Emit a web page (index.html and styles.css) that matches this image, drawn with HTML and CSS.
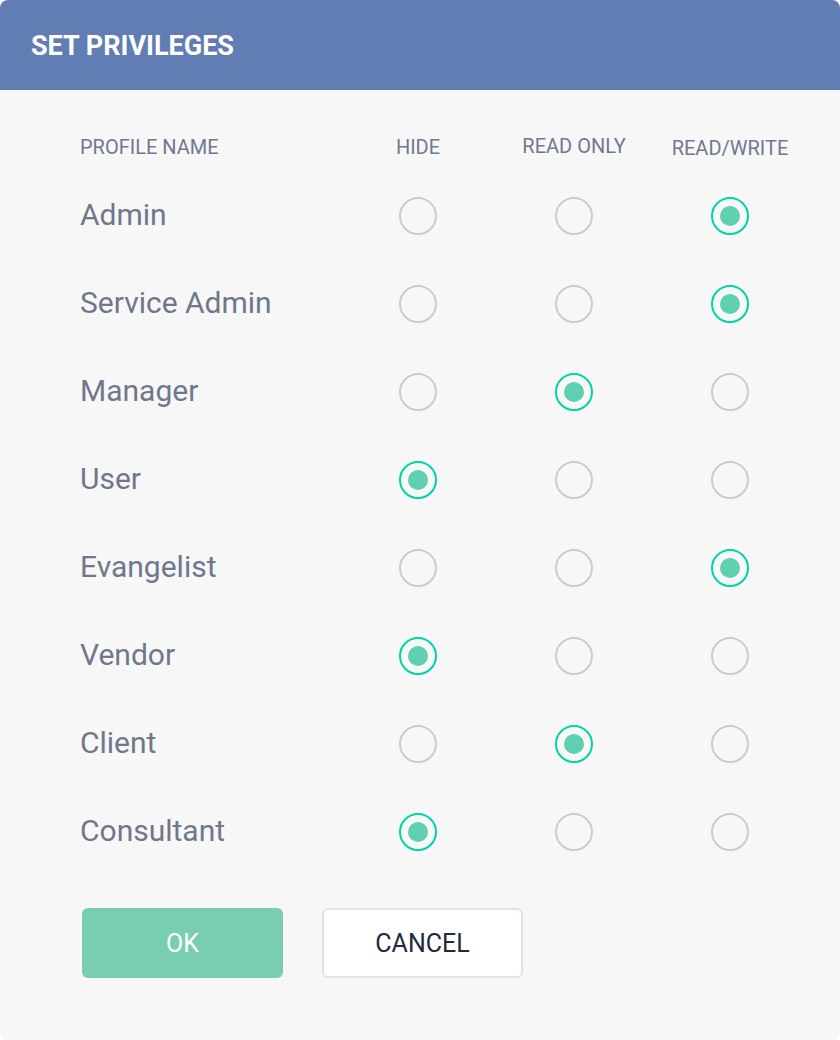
FILE: index.html
```html
<!DOCTYPE html>
<html lang="en">
<head>
<meta charset="utf-8">
<title>Set Privileges</title>
<link rel="stylesheet" href="styles.css">
</head>
<body>
<div class="dialog">
  <div class="dialog-header">
    <h1 class="dialog-title">SET PRIVILEGES</h1>
  </div>
  <div class="dialog-body">
    <div class="table">
      <div class="row head">
        <div class="cell name">PROFILE NAME</div>
        <div class="cell col">HIDE</div>
        <div class="cell col up">READ ONLY</div>
        <div class="cell col down">READ/WRITE</div>
      </div>
      <div class="row">
        <div class="cell name">Admin</div>
        <div class="cell col"><span class="radio"></span></div>
        <div class="cell col"><span class="radio"></span></div>
        <div class="cell col"><span class="radio on"></span></div>
      </div>
      <div class="row">
        <div class="cell name">Service Admin</div>
        <div class="cell col"><span class="radio"></span></div>
        <div class="cell col"><span class="radio"></span></div>
        <div class="cell col"><span class="radio on"></span></div>
      </div>
      <div class="row">
        <div class="cell name">Manager</div>
        <div class="cell col"><span class="radio"></span></div>
        <div class="cell col"><span class="radio on"></span></div>
        <div class="cell col"><span class="radio"></span></div>
      </div>
      <div class="row">
        <div class="cell name">User</div>
        <div class="cell col"><span class="radio on"></span></div>
        <div class="cell col"><span class="radio"></span></div>
        <div class="cell col"><span class="radio"></span></div>
      </div>
      <div class="row">
        <div class="cell name">Evangelist</div>
        <div class="cell col"><span class="radio"></span></div>
        <div class="cell col"><span class="radio"></span></div>
        <div class="cell col"><span class="radio on"></span></div>
      </div>
      <div class="row">
        <div class="cell name">Vendor</div>
        <div class="cell col"><span class="radio on"></span></div>
        <div class="cell col"><span class="radio"></span></div>
        <div class="cell col"><span class="radio"></span></div>
      </div>
      <div class="row">
        <div class="cell name">Client</div>
        <div class="cell col"><span class="radio"></span></div>
        <div class="cell col"><span class="radio on"></span></div>
        <div class="cell col"><span class="radio"></span></div>
      </div>
      <div class="row">
        <div class="cell name">Consultant</div>
        <div class="cell col"><span class="radio on"></span></div>
        <div class="cell col"><span class="radio"></span></div>
        <div class="cell col"><span class="radio"></span></div>
      </div>
    </div>
    <div class="actions">
      <button class="btn btn-ok">OK</button>
      <button class="btn btn-cancel">CANCEL</button>
    </div>
  </div>
</div>
</body>
</html>
```

FILE: styles.css
```css
* { box-sizing: border-box; }
html, body {
  margin: 0;
  padding: 0;
  background: #ffffff;
  font-family: Roboto, "Liberation Sans", sans-serif;
}
.dialog {
  width: 840px;
  height: 1040px;
  background: #f7f7f8;
  border-radius: 8px;
  overflow: hidden;
  display: flex;
  flex-direction: column;
}
.dialog-header {
  height: 90px;
  background: #617db3;
  display: flex;
  align-items: center;
  padding-left: 31px;
}
.dialog-title {
  margin: 0;
  color: #ffffff;
  font-size: 27px;
  font-weight: 700;
  letter-spacing: 0;
  position: relative;
  top: 1px;
}
.dialog-body {
  padding: 34px 0 0 80px;
}
.table {
  display: flex;
  flex-direction: column;
}
.row {
  display: grid;
  grid-template-columns: 260px 156px 156px 156px;
  align-items: center;
  height: 88px;
}
.row.head {
  height: 46px;
}
.head .cell {
  font-size: 20px;
  color: #717890;
  text-transform: uppercase;
}
.head .cell.up { margin-bottom: 3px; }
.head .cell.down { margin-top: 2px; }
.cell.col {
  display: flex;
  justify-content: center;
}
.row:not(.head) .name {
  font-size: 30px;
  color: #6f778a;
}
.radio {
  width: 38px;
  height: 38px;
  border-radius: 50%;
  border: 2px solid #cccccc;
  display: flex;
  align-items: center;
  justify-content: center;
  margin-top: 4px;
}
.radio.on {
  border-color: #00d3a7;
}
.radio.on::after {
  content: "";
  width: 20px;
  height: 20px;
  border-radius: 50%;
  background: #5ecfb1;
}
.actions {
  display: flex;
  gap: 39px;
  margin-top: 34px;
  padding-left: 2px;
}
.btn {
  width: 201px;
  height: 70px;
  border-radius: 6px;
  font-family: Roboto, "Liberation Sans", sans-serif;
  font-size: 25px;
  cursor: pointer;
}
.btn-ok {
  background: #79cdb1;
  border: none;
  color: #ffffff;
}
.btn-cancel {
  background: #ffffff;
  border: 2px solid #dde2ee;
  color: #232a3d;
}
```
